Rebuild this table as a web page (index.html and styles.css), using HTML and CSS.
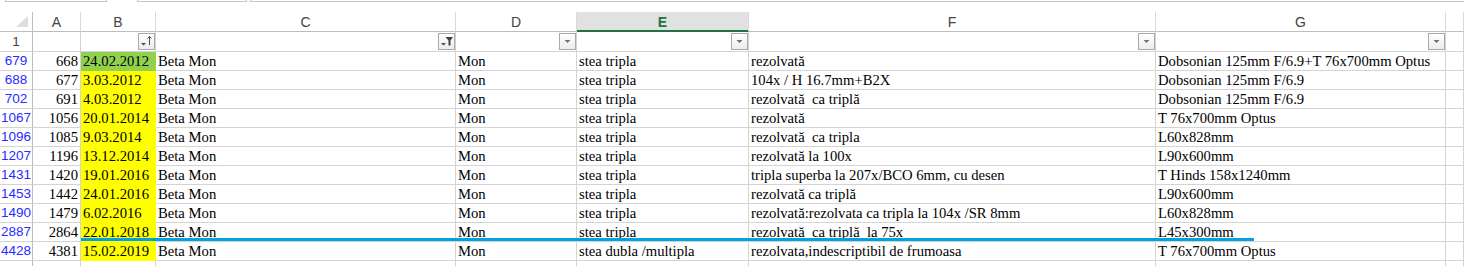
FILE: index.html
```html
<!DOCTYPE html>
<html lang="ro">
<head>
<meta charset="utf-8">
<title>Sheet</title>
<link rel="stylesheet" href="styles.css">
</head>
<body>
<div class="top">
  <div class="fbx fbx1"></div>
  <div class="fbx fbx2"></div>
  <div class="fbx fbx3"></div>
</div>
<div class="sheet">
  <div class="corner"><svg width="32" height="19" viewBox="0 0 32 19"><polygon points="28,4 28,15 16,15" fill="#dedede"/></svg></div>
  <div class="ch">A</div>
  <div class="ch">B</div>
  <div class="ch">C</div>
  <div class="ch">D</div>
  <div class="ch sel">E</div>
  <div class="ch">F</div>
  <div class="ch">G</div>
  <div class="ch"></div>

  <div class="rh rh1">1</div>
  <div class="fc"></div>
  <div class="fc"><span class="btn"><svg width="15" height="15" viewBox="0 0 15 15"><polygon points="2,9 7,9 4.5,11.5" fill="#4a4a4a"/><path d="M10.5 2.5 V11 M8.5 4.5 L10.5 2.5 L12.5 4.5" stroke="#4a4a4a" stroke-width="1" fill="none"/></svg></span></div>
  <div class="fc"><span class="btn"><svg width="15" height="15" viewBox="0 0 15 15"><polygon points="2,9 7,9 4.5,11.5" fill="#4a4a4a"/><polygon points="6.5,3 14,3 11.5,6.5 11.5,11.5 9.5,11.5 9.5,6.5" fill="#404040"/></svg></span></div>
  <div class="fc"><span class="btn"><svg width="15" height="15" viewBox="0 0 15 15"><polygon points="4.5,6 10.5,6 7.5,9" fill="#707070"/></svg></span></div>
  <div class="fc"><span class="btn"><svg width="15" height="15" viewBox="0 0 15 15"><polygon points="4.5,6 10.5,6 7.5,9" fill="#707070"/></svg></span></div>
  <div class="fc"><span class="btn"><svg width="15" height="15" viewBox="0 0 15 15"><polygon points="4.5,6 10.5,6 7.5,9" fill="#707070"/></svg></span></div>
  <div class="fc"><span class="btn"><svg width="15" height="15" viewBox="0 0 15 15"><polygon points="4.5,6 10.5,6 7.5,9" fill="#707070"/></svg></span></div>
  <div class="fc"></div>

  <div class="rh">679</div><div class="c num">668</div><div class="c b green">24.02.2012</div><div class="c">Beta Mon</div><div class="c">Mon</div><div class="c">stea tripla</div><div class="c">rezolvată</div><div class="c">Dobsonian 125mm F/6.9+T 76x700mm Optus</div><div class="c"></div>
  <div class="rh">688</div><div class="c num">677</div><div class="c b yel">3.03.2012</div><div class="c">Beta Mon</div><div class="c">Mon</div><div class="c">stea tripla</div><div class="c">104x / H 16.7mm+B2X</div><div class="c">Dobsonian 125mm F/6.9</div><div class="c"></div>
  <div class="rh">702</div><div class="c num">691</div><div class="c b yel">4.03.2012</div><div class="c">Beta Mon</div><div class="c">Mon</div><div class="c">stea tripla</div><div class="c">rezolvată  ca triplă</div><div class="c">Dobsonian 125mm F/6.9</div><div class="c"></div>
  <div class="rh">1067</div><div class="c num">1056</div><div class="c b yel">20.01.2014</div><div class="c">Beta Mon</div><div class="c">Mon</div><div class="c">stea tripla</div><div class="c">rezolvată</div><div class="c">T 76x700mm Optus</div><div class="c"></div>
  <div class="rh">1096</div><div class="c num">1085</div><div class="c b yel">9.03.2014</div><div class="c">Beta Mon</div><div class="c">Mon</div><div class="c">stea tripla</div><div class="c">rezolvată  ca tripla</div><div class="c">L60x828mm</div><div class="c"></div>
  <div class="rh">1207</div><div class="c num">1196</div><div class="c b yel">13.12.2014</div><div class="c">Beta Mon</div><div class="c">Mon</div><div class="c">stea tripla</div><div class="c">rezolvată la 100x</div><div class="c">L90x600mm</div><div class="c"></div>
  <div class="rh">1431</div><div class="c num">1420</div><div class="c b yel">19.01.2016</div><div class="c">Beta Mon</div><div class="c">Mon</div><div class="c">stea tripla</div><div class="c">tripla superba la 207x/BCO 6mm, cu desen</div><div class="c">T Hinds 158x1240mm</div><div class="c"></div>
  <div class="rh">1453</div><div class="c num">1442</div><div class="c b yel">24.01.2016</div><div class="c">Beta Mon</div><div class="c">Mon</div><div class="c">stea tripla</div><div class="c">rezolvată ca triplă</div><div class="c">L90x600mm</div><div class="c"></div>
  <div class="rh">1490</div><div class="c num">1479</div><div class="c b yel">6.02.2016</div><div class="c">Beta Mon</div><div class="c">Mon</div><div class="c">stea tripla</div><div class="c">rezolvată:rezolvata ca tripla la 104x /SR 8mm</div><div class="c">L60x828mm</div><div class="c"></div>
  <div class="rh">2887</div><div class="c num">2864</div><div class="c b yel">22.01.2018</div><div class="c">Beta Mon</div><div class="c">Mon</div><div class="c">stea tripla</div><div class="c">rezolvată  ca triplă  la 75x</div><div class="c">L45x300mm</div><div class="c"></div>
  <div class="rh">4428</div><div class="c num">4381</div><div class="c b yel">15.02.2019</div><div class="c">Beta Mon</div><div class="c">Mon</div><div class="c">stea dubla /multipla</div><div class="c">rezolvata,indescriptibil de frumoasa</div><div class="c">T 76x700mm Optus</div><div class="c"></div>
  <div class="rh"></div><div class="c"></div><div class="c"></div><div class="c"></div><div class="c"></div><div class="c"></div><div class="c"></div><div class="c"></div><div class="c"></div>
</div>
<div class="mark"></div>
</body>
</html>
```
FILE: styles.css
```css
html, body {
  margin: 0;
  padding: 0;
  background: #ffffff;
  overflow: hidden;
}

.top {
  display: flex;
  height: 12px;
}

.fbx {
  height: 1px;
  border: 1px solid #c6c6c6;
  border-top: 0;
  background: #ffffff;
}

.fbx1 {
  margin-left: 5px;
  width: 100px;
}

.fbx2 {
  margin-left: 30px;
  width: 108px;
}

.fbx3 {
  margin-left: 3px;
  flex: 1;
  border-right: 0;
}

.sheet {
  display: grid;
  grid-template-columns: 33px 48px 75px 300px 121px 172px 407px 290px 1fr;
  grid-template-rows: 20px 20px;
  grid-auto-rows: 19px;
}

.sheet > div {
  box-sizing: border-box;
  border-right: 1px solid #d4d4d4;
  border-bottom: 1px solid #d4d4d4;
  overflow: hidden;
}

.corner {
  border-right-color: #bdbdbd !important;
  border-bottom-color: #bdbdbd !important;
}

.corner svg {
  display: block;
}

.ch {
  font-family: "Liberation Sans", Arial, sans-serif;
  font-size: 14px;
  color: #444444;
  text-align: center;
  padding-top: 1px;
  line-height: 18px;
  border-right-color: #dadada !important;
  border-bottom-color: #bdbdbd !important;
}

.ch.sel {
  background: #e1e1e1;
  color: #217346;
  font-weight: bold;
  border-bottom: 1px solid #217346 !important;
  box-shadow: inset 0 -1px 0 #217346;
}

.rh {
  font-family: "Liberation Sans", Arial, sans-serif;
  font-size: 13.5px;
  line-height: 18px;
  text-align: center;
  color: #2a2aff;
  border-right-color: #bdbdbd !important;
}

.rh1 {
  color: #444444;
  line-height: 19px;
}

.fc {
  display: flex;
  justify-content: flex-end;
  align-items: flex-start;
  padding-top: 1px;
}

.btn {
  display: block;
  width: 17px;
  height: 17px;
  box-sizing: border-box;
  border: 1px solid #a9a9a9;
  background: linear-gradient(#ffffff, #ececec);
}

.btn svg {
  display: block;
}

.c {
  font-family: "Liberation Serif", "Times New Roman", serif;
  font-size: 14.67px;
  line-height: 17px;
  padding: 1px 2px 0 2px;
  color: #000000;
  white-space: pre;
}

.num {
  text-align: right;
}

.yel {
  background: #ffff00;
  border-right-color: #ffff00 !important;
  border-bottom-color: #ffff00 !important;
}

.green {
  background: #92d050;
  border-right-color: #92d050 !important;
  border-bottom-color: #92d050 !important;
}

.mark {
  position: absolute;
  top: 238px;
  left: 81px;
  width: 1173px;
  height: 3px;
  background: #00a2e0;
}
```
